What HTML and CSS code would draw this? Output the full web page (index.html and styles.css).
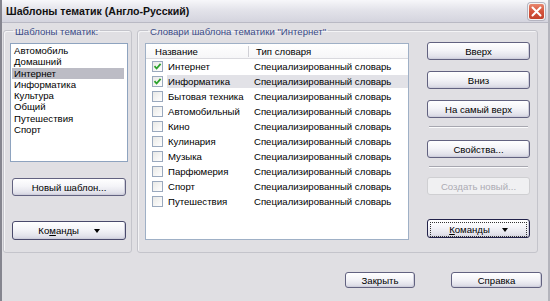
FILE: index.html
```html
<!DOCTYPE html>
<html lang="ru">
  <head>
    <meta charset="UTF-8" />
    <title>Шаблоны тематик</title>
    <link rel="stylesheet" href="styles.css">
  </head>
  <body>
    <div class="window">
      <div class="titlebar">
        <span class="title">Шаблоны тематик (Англо-Русский)</span>
        <span class="close-btn">
          <svg width="11" height="11" viewBox="0 0 11 11">
            <path d="M1.5 1.5 L9.5 9.5 M9.5 1.5 L1.5 9.5" stroke="#fff" stroke-width="2" stroke-linecap="round" />
          </svg>
        </span>
      </div>

      <div class="client">
        <div class="groups">
          <fieldset class="group group-themes">
            <legend>Шаблоны тематик:</legend>
            <ul class="listbox">
              <li>Автомобиль</li>
              <li>Домашний</li>
              <li class="selected">Интернет</li>
              <li>Информатика</li>
              <li>Культура</li>
              <li>Общий</li>
              <li>Путешествия</li>
              <li>Спорт</li>
            </ul>
            <button class="btn btn-new">Новый шаблон...</button>
            <button class="btn btn-cmd">Ко<u>м</u>анды <span class="arrow"></span></button>
          </fieldset>

          <fieldset class="group group-dicts">
            <legend>Словари шаблона тематики "Интернет"</legend>
            <div class="listview">
              <div class="lv-header">
                <span class="hd-name">Название</span>
                <span class="hd-type">Тип словаря</span>
              </div>
              <div class="lv-row">
                <span class="check checked"><svg width="9" height="9" viewBox="0 0 9 9"><path d="M1.5 4.2 L3.6 6.5 L7.6 1.8" fill="none" stroke="#2aa12a" stroke-width="1.8" /></svg></span>
                <span class="lv-cells"><span class="c-name">Интернет</span><span class="c-type">Специализированный словарь</span></span>
              </div>
              <div class="lv-row selected">
                <span class="check checked"><svg width="9" height="9" viewBox="0 0 9 9"><path d="M1.5 4.2 L3.6 6.5 L7.6 1.8" fill="none" stroke="#2aa12a" stroke-width="1.8" /></svg></span>
                <span class="lv-cells"><span class="c-name">Информатика</span><span class="c-type">Специализированный словарь</span></span>
              </div>
              <div class="lv-row">
                <span class="check"></span>
                <span class="lv-cells"><span class="c-name">Бытовая техника</span><span class="c-type">Специализированный словарь</span></span>
              </div>
              <div class="lv-row">
                <span class="check"></span>
                <span class="lv-cells"><span class="c-name">Автомобильный</span><span class="c-type">Специализированный словарь</span></span>
              </div>
              <div class="lv-row">
                <span class="check"></span>
                <span class="lv-cells"><span class="c-name">Кино</span><span class="c-type">Специализированный словарь</span></span>
              </div>
              <div class="lv-row">
                <span class="check"></span>
                <span class="lv-cells"><span class="c-name">Кулинария</span><span class="c-type">Специализированный словарь</span></span>
              </div>
              <div class="lv-row">
                <span class="check"></span>
                <span class="lv-cells"><span class="c-name">Музыка</span><span class="c-type">Специализированный словарь</span></span>
              </div>
              <div class="lv-row">
                <span class="check"></span>
                <span class="lv-cells"><span class="c-name">Парфюмерия</span><span class="c-type">Специализированный словарь</span></span>
              </div>
              <div class="lv-row">
                <span class="check"></span>
                <span class="lv-cells"><span class="c-name">Спорт</span><span class="c-type">Специализированный словарь</span></span>
              </div>
              <div class="lv-row">
                <span class="check"></span>
                <span class="lv-cells"><span class="c-name">Путешествия</span><span class="c-type">Специализированный словарь</span></span>
              </div>
            </div>

            <div class="side">
              <button class="btn side-btn">Вверх</button>
              <button class="btn side-btn">Вниз</button>
              <button class="btn side-btn">На самый верх</button>
              <div class="sep sep-1"></div>
              <button class="btn side-btn btn-props">Свойства...</button>
              <div class="sep sep-2"></div>
              <button class="btn side-btn" disabled>Создать новый...</button>
              <button class="btn side-btn btn-default"><span class="focus"><u>К</u>оманды <span class="arrow"></span></span></button>
            </div>
          </fieldset>
        </div>

        <div class="footer">
          <button class="btn btn-close">Закрыть</button>
          <button class="btn btn-help">Справка</button>
        </div>
      </div>
    </div>
  </body>
</html>
```

FILE: styles.css
```css
body {
  margin: 0;
  font-family: "Liberation Sans", Arial, sans-serif;
  font-size: 9.6px;
  color: #000;
}

.window {
  width: 550px;
  height: 301px;
  box-sizing: border-box;
  background: #e0dfe3;
  border-left: 2px solid #85858f;
  border-right: 2px solid #b4b4bc;
  display: flex;
  flex-direction: column;
  overflow: hidden;
}

/* title bar */
.titlebar {
  height: 22px;
  flex: none;
  display: flex;
  align-items: center;
  padding: 0 3px 0 4px;
  background: linear-gradient(to bottom, #f7f7fa 0%, #e3e3ea 45%, #d4d4de 100%);
  border-bottom: 1px solid #b9b9c4;
}

.title {
  flex: 1;
  font-size: 10.6px;
  font-weight: bold;
  color: #111;
}

.close-btn {
  width: 17px;
  height: 17px;
  box-sizing: border-box;
  display: flex;
  align-items: center;
  justify-content: center;
  border: 1px solid #f4f4f4;
  border-radius: 3px;
  background: linear-gradient(to bottom, #e8876f 0%, #d5533c 50%, #c2412c 100%);
  box-shadow: 0 0 0 1px #b4b4c0;
}

/* client area */
.client {
  flex: 1;
  display: flex;
  flex-direction: column;
  padding: 0 0 0 1px;
}

.groups {
  display: flex;
  gap: 5px;
}

.group {
  margin: 0;
  border: 1px solid #c4c4cb;
  border-radius: 3px;
  box-shadow: inset 1px 1px 0 #f4f4f6;
  min-width: 0;
  box-sizing: border-box;
}

.group legend {
  padding: 4px 2px 0 2px;
  margin-left: 3px;
  line-height: 10px;
  color: #3b4b87;
}

.group-themes {
  width: 129px;
  height: 230px;
  padding: 6px 3px 0 6px;
  display: flex;
  flex-direction: column;
}

.group-dicts {
  width: 401px;
  height: 230px;
  padding: 6px 6px 0 7px;
  display: flex;
  gap: 18px;
}

/* list box */
.listbox {
  list-style: none;
  margin: 0;
  padding: 1px 1px 0 1px;
  height: 119px;
  box-sizing: border-box;
  background: #fff;
  border: 1px solid #8ea3bf;
}

.listbox li {
  line-height: 11.3px;
  padding-left: 2px;
}

.listbox li.selected {
  background: #bcbcc5;
  margin-right: 2px;
}

/* buttons */
.btn {
  font-family: inherit;
  font-size: 9.6px;
  color: #000;
  height: 18px;
  padding: 0;
  box-sizing: border-box;
  border: 1px solid #626280;
  border-radius: 3px;
  background: linear-gradient(to bottom, #ffffff 0%, #f4f4f8 45%, #e4e4ec 80%, #d3d3e0 100%);
  box-shadow: inset -1px -1px 0 #cfcfdc;
}

.btn:disabled {
  color: #acabb2;
  border-color: #cfcfd2;
  background: #f0f0f2;
  box-shadow: none;
}

.btn u {
  text-decoration-thickness: 1px;
  text-underline-offset: 1px;
}

.arrow {
  display: inline-block;
  width: 0;
  height: 0;
  margin-left: 12px;
  vertical-align: 1px;
  border-left: 3.5px solid transparent;
  border-right: 3.5px solid transparent;
  border-top: 4px solid #000;
}

.btn-new {
  margin: 16px 2px 0 2px;
  height: 18px;
}

.btn-cmd {
  margin: 25px 2px 0 2px;
  height: 19px;
  border-color: #4a4a6c;
}

/* list view */
.listview {
  width: 264px;
  height: 197px;
  box-sizing: border-box;
  background: #fff;
  border: 1px solid #9fb0c6;
  flex: none;
}

.lv-header {
  display: flex;
  height: 14px;
  align-items: center;
  border-bottom: 1px solid #d9d9de;
  background: linear-gradient(to bottom, #ffffff, #f6f6f8);
}

.hd-name {
  width: 93px;
  padding-left: 9px;
  border-right: 1px solid #d0d0d6;
  line-height: 11px;
}

.hd-type {
  padding-left: 7px;
}

.lv-row {
  display: flex;
  align-items: center;
  height: 15px;
}

.check {
  width: 11px;
  height: 11px;
  box-sizing: border-box;
  margin-left: 6px;
  border: 1px solid #9aa9be;
  background: linear-gradient(to bottom right, #e9e9e6, #ffffff);
  display: flex;
  align-items: center;
  justify-content: center;
}

.lv-cells {
  flex: 1;
  display: flex;
  height: 13px;
  align-items: center;
  margin-left: 4px;
}

.lv-row.selected .lv-cells {
  background: #e2e2e7;
}

.c-name {
  width: 80px;
  padding-left: 1px;
}

.c-type {
  padding-left: 6px;
}

/* side buttons */
.side {
  width: 103px;
  display: flex;
  flex-direction: column;
  margin-top: -1px;
}

.side-btn + .side-btn {
  margin-top: 11px;
}

.sep {
  height: 1px;
  margin: 0 2px;
  background: #a7a7b0;
  border-bottom: 1px solid #fbfbfc;
}

.sep-1 {
  margin-top: 8px;
}

.btn-props {
  margin-top: 12px;
}

.sep-2 {
  margin-top: 8px;
}

.side .btn:disabled {
  margin-top: 9px;
}

.side .btn-default {
  margin-top: 24px;
  height: 19px;
  border: 1px solid #22224a;
  padding: 2px;
}

.focus {
  display: flex;
  align-items: center;
  justify-content: center;
  height: 100%;
  border: 1px dotted #333;
}

/* footer */
.footer {
  display: flex;
  justify-content: flex-end;
  gap: 36px;
  margin-top: 19px;
  padding-right: 6px;
}

.btn-close {
  width: 70px;
  height: 16px;
}

.btn-help {
  width: 91px;
  height: 16px;
}
```
